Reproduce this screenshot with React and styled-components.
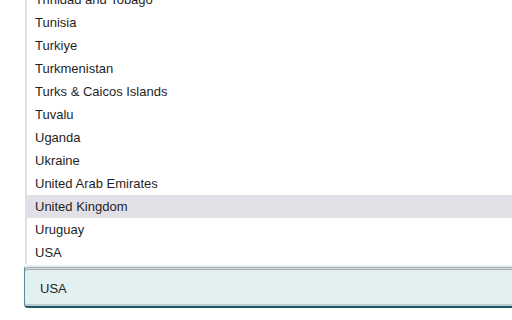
import React, { useEffect, useRef } from "react";
import styled, { createGlobalStyle } from "styled-components";

const GlobalStyle = createGlobalStyle`
  html, body {
    margin: 0;
    padding: 0;
    background: #ffffff;
    overflow: hidden;
  }
  body {
    font-family: "Liberation Sans", Arial, sans-serif;
  }
`;

const Page = styled.div`
  width: 620px;
  padding-left: 24px;
  display: flex;
  flex-direction: column;
`;

const Dropdown = styled.ul`
  list-style: none;
  margin: 0 0 0 1px;
  padding: 0;
  height: 264px;
  overflow: hidden;
  border-left: 2px solid #dbe3e7;
  border-bottom: 1px solid #ffffff;
  background: #ffffff;
`;

const Option = styled.li`
  height: 23px;
  line-height: 23px;
  padding-left: 8px;
  font-size: 13px;
  color: #1f1f24;
  white-space: nowrap;
  background: ${(p) => (p.$active ? "#e1e0e6" : "transparent")};
`;

const Field = styled.input`
  box-sizing: border-box;
  height: 43px;
  margin: 0;
  padding: 4px 15px 0;
  font-family: "Liberation Sans", Arial, sans-serif;
  font-size: 13px;
  color: #1f1f24;
  background: #e3f0f1;
  border: 1px solid #5f8a95;
  border-top: 2px solid #e3f0f1;
  border-bottom: 2px solid #1c5a68;
  border-radius: 4px;
  box-shadow: inset 0 1px 0 #a3a5a8, inset 0 2px 0 #d6e2e4,
    inset 0 3px 0 #a3a5a8, inset 0 -2px 0 #bccacd;
  outline: none;
`;

const countries = [
  "Trinidad and Tobago",
  "Tunisia",
  "Turkiye",
  "Turkmenistan",
  "Turks & Caicos Islands",
  "Tuvalu",
  "Uganda",
  "Ukraine",
  "United Arab Emirates",
  "United Kingdom",
  "Uruguay",
  "USA",
];

export default function App() {
  const listRef = useRef(null);

  useEffect(() => {
    // the menu is scrolled so the first entry is half hidden
    if (listRef.current) listRef.current.scrollTop = 12;
  }, []);

  return (
    <>
      <GlobalStyle />
      <Page>
        <Dropdown ref={listRef}>
          {countries.map((c) => (
            <Option key={c} $active={c === "United Kingdom"}>
              {c}
            </Option>
          ))}
        </Dropdown>
        <Field defaultValue="USA" />
      </Page>
    </>
  );
}
